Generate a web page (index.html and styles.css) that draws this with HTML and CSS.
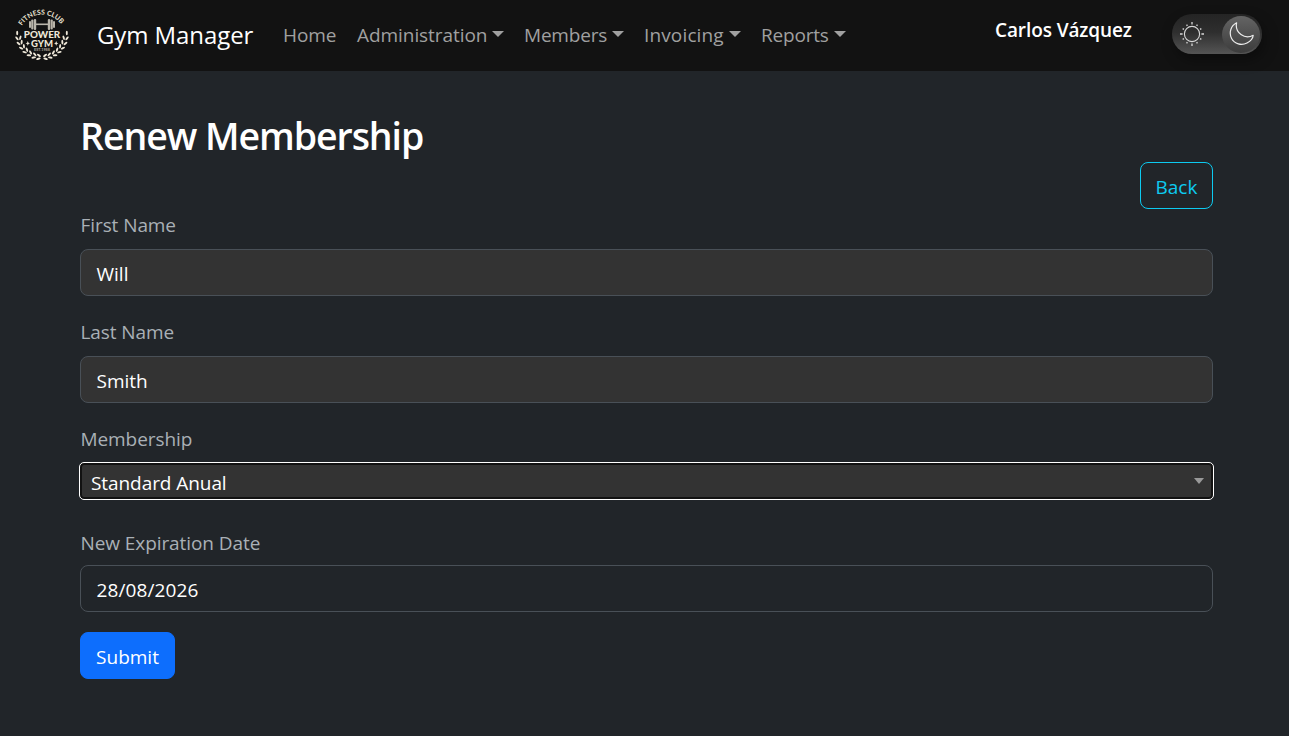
FILE: index.html
```html
<!DOCTYPE html>
<html lang="en">
<head>
<meta charset="utf-8">
<title>Gym Manager</title>
<link rel="stylesheet" href="styles.css">
</head>
<body>
<header class="navbar">
  <svg class="logo" viewBox="0 0 60 54" role="img" aria-label="Power Gym">
    <defs>
      <path id="arc" d="M9.800 16.800 A 23.800 23.800 0 0 1 50.200 16.800"/>
      <g id="leaves">
        <ellipse cx="4.500" cy="24.500" rx="1" ry="2.300" transform="rotate(-28 4.500 24.500)"/>
        <ellipse cx="7.900" cy="24.500" rx="1" ry="2.300" transform="rotate(28 7.900 24.500)"/>
      </g>
      <g id="branch" fill="#eee7d8">
        <ellipse cx="5.200" cy="24" rx="1" ry="2.300"/>
        <use href="#leaves" transform="rotate(-11 30 24.500)"/>
        <use href="#leaves" transform="rotate(-23 30 24.500)"/>
        <use href="#leaves" transform="rotate(-35 30 24.500)"/>
        <use href="#leaves" transform="rotate(-47 30 24.500)"/>
        <use href="#leaves" transform="rotate(-59 30 24.500)"/>
        <use href="#leaves" transform="rotate(-71 30 24.500)"/>
        <use href="#leaves" transform="rotate(-82 30 24.500)"/>
      </g>
    </defs>
    <text class="logo-arc"><textPath href="#arc" textLength="46">FITNESS CLUB</textPath></text>
    <g fill="#b9b5ab">
      <rect x="22" y="14.500" width="16" height="1.600"/>
      <rect x="17" y="12" width="2" height="7" rx="1"/>
      <rect x="19.200" y="10.500" width="2.200" height="10" rx="1"/>
      <rect x="21.800" y="10" width="2.400" height="11" rx="1"/>
      <rect x="35.800" y="10" width="2.400" height="11" rx="1"/>
      <rect x="38.600" y="10.500" width="2.200" height="10" rx="1"/>
      <rect x="41" y="12" width="2" height="7" rx="1"/>
    </g>
    <text class="logo-word" x="11.800" y="29.200" textLength="36.400" lengthAdjust="spacingAndGlyphs">POWER</text>
    <text class="logo-word" x="19" y="37.500" textLength="22" lengthAdjust="spacingAndGlyphs">GYM</text>
    <path d="M15.800 32 16.500 33.800 18 34.400 16.500 35.100 15.800 36.800 15.100 35.100 13.600 34.400 15.100 33.800ZM44.200 32 44.900 33.800 46.400 34.400 44.900 35.100 44.200 36.800 43.500 35.100 42 34.400 43.500 33.800Z" fill="#eee7d8"/>
    <text class="logo-est" x="22" y="42.200" textLength="16" lengthAdjust="spacingAndGlyphs">EST.1988</text>
    <use href="#branch"/>
    <use href="#branch" transform="matrix(-1 0 0 1 60 0)"/>
  </svg>
  <span class="brand">Gym Manager</span>
  <nav class="menu">
    <a class="link home">Home</a>
    <a class="link administration">Administration<i class="caret"></i></a>
    <a class="link members">Members<i class="caret"></i></a>
    <a class="link invoicing">Invoicing<i class="caret"></i></a>
    <a class="link reports">Reports<i class="caret"></i></a>
  </nav>
  <span class="user">Carlos Vázquez</span>
  <div class="theme-toggle">
    <svg class="sun" viewBox="0 0 24 24" fill="none" stroke="#d8d8d8">
      <circle cx="12" cy="12" r="7.600" stroke-width="1.100"/>
      <g stroke-width="1.300">
        <path d="M12 0V2.600M12 21.400V24M0 12H2.600M21.400 12H24"/>
        <path d="M12 1.200V2.700M12 21.300V22.800M1.200 12H2.700M21.300 12H22.800" transform="rotate(30 12 12)"/>
        <path d="M12 1.200V2.700M12 21.300V22.800M1.200 12H2.700M21.300 12H22.800" transform="rotate(60 12 12)"/>
      </g>
    </svg>
    <span class="knob">
      <svg class="moon" viewBox="0 0 26 26" fill="none" stroke="#ececec" stroke-width="1.200" stroke-linejoin="round">
        <path d="M7.600 1.800C1.500 5 -.2 12 2.600 17.500C5.500 23 12.400 25 18 22C21.800 20 24 17 24.200 14.300C20.500 16.400 15.500 16.200 12 13.600C8.300 10.800 6.700 6 7.600 1.800Z"/>
      </svg>
    </span>
  </div>
</header>
<main class="page">
  <h1 class="title">Renew Membership</h1>
  <div class="actions"><button class="button back">Back</button></div>
  <form class="form">
    <label class="label">First Name</label>
    <div class="input readonly">Will</div>
    <label class="label">Last Name</label>
    <div class="input readonly">Smith</div>
    <label class="label">Membership</label>
    <div class="select"><span>Standard Anual</span><i class="select-arrow"></i></div>
    <label class="label date-label">New Expiration Date</label>
    <div class="input date">28/08/2026</div>
    <button class="button submit" type="button">Submit</button>
  </form>
</main>
</body>
</html>
```
FILE: styles.css
```css
* { box-sizing: border-box; }
body {
  margin: 0;
  height: 736px;
  overflow: hidden;
  background: #212529;
  color: #fff;
  font: 19px/30px "Open Sans", "Noto Sans", sans-serif;
}
.navbar {
  display: flex;
  align-items: center;
  height: 71px;
  padding-left: 12px;
  background: #121212;
  white-space: nowrap;
}
.logo { width: 60px; height: 54px; flex: none; }
.logo text { fill: #eee7d8; font-family: Lato, sans-serif; font-weight: 700; }
.logo .logo-arc { font-size: 6.800px; }
.logo .logo-word { font-size: 8.600px; font-weight: 900; }
.logo .logo-est { font-size: 3.400px; fill: #aaa69c; }
.brand { width: 186px; padding: 0 0 2px 25px; font-size: 24px; letter-spacing: -.08px; }
.menu { display: flex; flex: 1; padding: 0 0 2px 25px; color: #a0a0a0; }
.link { display: flex; align-items: center; letter-spacing: -.06px; }
.home { width: 74px; }
.administration { width: 167px; }
.members { width: 120px; letter-spacing: -.2px; }
.invoicing { width: 117px; letter-spacing: .14px; }
.reports { letter-spacing: -.2px; }
.caret {
  margin: 0 0 1px 5px;
  border: 6px solid transparent;
  border-top-color: currentColor;
  border-bottom: 0;
}
.user { width: 177px; margin-top: -11px; font-weight: 600; letter-spacing: -.1px; }
.theme-toggle {
  display: flex;
  align-items: center;
  justify-content: space-between;
  width: 90px;
  height: 40px;
  margin: -3px 27px 0 0;
  padding: 0 2px 0 8px;
  border-radius: 20px;
  background: linear-gradient(#242424, #2e2e2e 45%, #555);
  box-shadow: 3px 6px 14px rgba(0, 0, 0, .35);
}
.sun { width: 24px; height: 24px; }
.knob {
  display: flex;
  align-items: center;
  justify-content: center;
  width: 38px;
  height: 37px;
  border-radius: 50%;
  background: linear-gradient(#646464, #3c3c3c);
}
.moon { width: 26px; height: 26px; margin-left: 2px; }
.page { padding: 41px 76px 0 80px; }
.title { margin: 0; height: 50px; font-size: 37.500px; line-height: 47px; font-weight: 600; letter-spacing: -1.060px; }
.actions { display: flex; justify-content: flex-end; height: 48px; }
.button {
  height: 47px;
  padding: 3px 0 0;
  border: 1px solid;
  border-radius: 8px;
  background: none;
  font: inherit;
}
.back { width: 73px; color: #0dcaf0; }
.form { display: flex; flex-direction: column; align-items: stretch; }
.label { height: 39px; padding-left: .5px; color: #a9b0b6; letter-spacing: -.08px; }
.input {
  height: 47px;
  margin-bottom: 21px;
  padding: 9px 15px 0 15.500px;
  border: 1px solid #495057;
  border-radius: 8px;
}
.readonly { background: #333; }
.select {
  display: flex;
  align-items: center;
  justify-content: space-between;
  height: 38px;
  margin: -1px -1px 28px;
  padding: 4px 7px 0 11px;
  border: 1px solid #fff;
  border-radius: 5px;
  background: #333;
  box-shadow: inset 0 0 0 2px #121212;
  letter-spacing: -.07px;
}
.select-arrow { margin: 0 2px 4px 0; border: 5px solid transparent; border-top: 6px solid #999; border-bottom: 0; }
.date { margin-bottom: 20px; letter-spacing: .12px; }
.date-label { height: 37px; }
.submit { width: 95px; border-color: #0d6efd; background: #0d6efd; color: #fff; }
```
